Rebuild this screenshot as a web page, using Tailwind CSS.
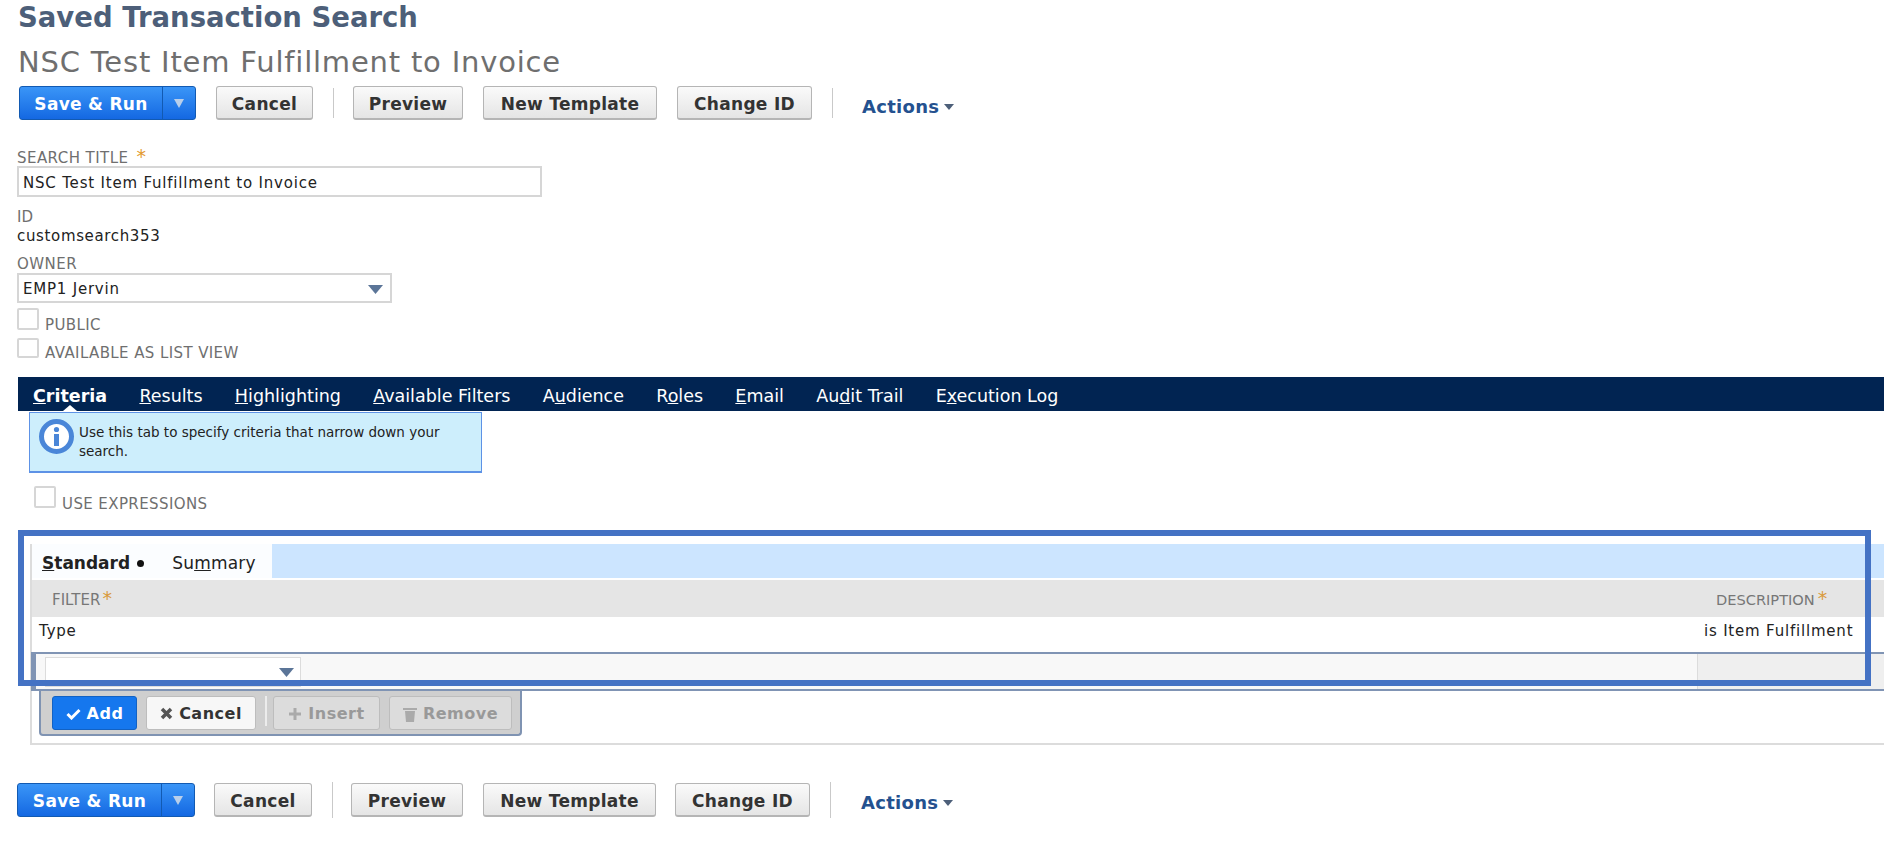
<!DOCTYPE html>
<html><head><meta charset="utf-8"><script src="https://cdn.jsdelivr.net/npm/@tailwindcss/browser@4"></script></head>
<body class="bg-white">
<div class="relative w-[1884px] h-[855px] overflow-hidden bg-white text-[#222] font-['DejaVu_Sans',sans-serif]">
  <h1 class="h-[32px] pl-[18px] leading-[34px] text-[27.5px] font-bold text-[#4d5f79]">Saved Transaction Search</h1>
  <h2 class="mt-[14px] h-[30px] pl-[18px] leading-[32px] text-[29px] tracking-[0.8px] text-[#6f6f6f]">NSC Test Item Fulfillment to Invoice</h2>
  <div class="mt-[10px] ml-[19px] flex items-center h-[34px] text-[17px] tracking-[0.3px] font-bold text-[#333]">
    <div class="flex h-[34px] w-[177px] rounded-[3px] border border-[#125ab2] bg-gradient-to-b from-[#3a95f7] to-[#1468e2] text-white">
      <div class="w-[143px] pt-[4px] flex items-center justify-center border-r border-[#125ab2]">Save &amp; Run</div>
      <div class="flex-1 flex items-center justify-center"><svg width="10" height="10" viewBox="0 0 10 10"><path d="M0 1h10L5 10z" fill="#b9cfea"/></svg></div>
    </div>
    <div class="ml-[20px] w-[97px] h-[34px] pt-[4px] flex items-center justify-center rounded-[3px] border border-[#b5b5b5] border-b-2 bg-gradient-to-b from-[#fafafa] to-[#e5e5e5]">Cancel</div>
    <div class="ml-[20px] w-px h-[30px] bg-[#c9c9c9]"></div>
    <div class="ml-[19px] w-[110px] h-[34px] pt-[4px] flex items-center justify-center rounded-[3px] border border-[#b5b5b5] border-b-2 bg-gradient-to-b from-[#fafafa] to-[#e5e5e5]">Preview</div>
    <div class="ml-[20px] w-[174px] h-[34px] pt-[4px] flex items-center justify-center rounded-[3px] border border-[#b5b5b5] border-b-2 bg-gradient-to-b from-[#fafafa] to-[#e5e5e5]">New Template</div>
    <div class="ml-[20px] w-[135px] h-[34px] pt-[4px] flex items-center justify-center rounded-[3px] border border-[#b5b5b5] border-b-2 bg-gradient-to-b from-[#fafafa] to-[#e5e5e5]">Change ID</div>
    <div class="ml-[20px] w-px h-[30px] bg-[#c9c9c9]"></div>
    <div class="ml-[29px] flex items-center gap-[5px] text-[#24518f] text-[18px] tracking-[0.3px] pt-[7px]">Actions<svg width="10" height="6" viewBox="0 0 10 6"><path d="M0 0h10L5 6z" fill="#4d5f79"/></svg></div>
  </div>

  <div class="ml-[17px] mt-[29px] pt-px h-[17px] flex items-start text-[15px] tracking-[0.45px] leading-[17px] text-[#6f6f6f]">SEARCH TITLE<span class="ml-[8px] text-[#e39a2f] text-[19px] leading-[12px]">*</span></div>
  <div class="ml-[17px] w-[525px] h-[31px] border-2 border-[#d6d6d6] pl-[4px] pt-[3px] flex items-center text-[15px] tracking-[0.8px] text-[#222]">NSC Test Item Fulfillment to Invoice</div>
  <div class="ml-[17px] mt-[12px] h-[16px] leading-[16px] text-[15px] text-[#6f6f6f]">ID</div>
  <div class="ml-[17px] mt-[3px] h-[16px] leading-[16px] text-[15px] tracking-[0.65px] text-[#222]">customsearch353</div>
  <div class="ml-[17px] mt-[11px] h-[16px] leading-[18px] text-[15px] tracking-[0.45px] text-[#6f6f6f]">OWNER</div>
  <div class="ml-[17px] mt-[2px] w-[375px] h-[30px] border-2 border-[#d6d6d6] pl-[4px] pr-[7px] pt-[2px] flex items-center justify-between text-[15px] tracking-[0.78px]">EMP1 Jervin<svg width="15" height="9" viewBox="0 0 15 9"><path d="M0 0h15L7.500 9z" fill="#5b7598"/></svg></div>
  <div class="ml-[17px] mt-[5px] h-[22px] flex items-end">
    <div class="w-[22px] h-[22px] border-2 border-[#d6d6d6] rounded-[2px]"></div>
    <div class="ml-[6px] h-[14px] leading-[16px] text-[15px] tracking-[0.4px] text-[#6f6f6f] -mb-[1px]">PUBLIC</div>
  </div>
  <div class="ml-[17px] mt-[8px] h-[20px] flex items-end">
    <div class="w-[22px] h-[20px] border-2 border-[#d6d6d6] rounded-[2px]"></div>
    <div class="ml-[6px] h-[14px] leading-[14px] text-[15px] tracking-[0.4px] text-[#6f6f6f] -mb-[2px]">AVAILABLE AS LIST VIEW</div>
  </div>

  <div class="relative ml-[18px] mt-[19px] h-[34px] bg-[#012452] pl-[15px] pt-[4px] flex items-center gap-[32.25px] text-[17.5px] text-white">
    <span class="font-bold"><u>C</u>riteria</span>
    <span><u>R</u>esults</span>
    <span><u>H</u>ighlighting</span>
    <span><u>A</u>vailable Filters</span>
    <span>A<u>u</u>dience</span>
    <span>R<u>o</u>les</span>
    <span><u>E</u>mail</span>
    <span>Au<u>d</u>it Trail</span>
    <span>E<u>x</u>ecution Log</span>
    <div class="absolute left-[45px] bottom-0 w-0 h-0 border-x-[7px] border-x-transparent border-b-[6px] border-b-white"></div>
  </div>
  <div class="ml-[29px] mt-px w-[453px] h-[61px] bg-[#cdeefc] border border-[#5d92e6] border-b-2 flex items-start pl-[9px] pt-[6px]">
    <svg class="shrink-0" width="35" height="35" viewBox="0 0 35 35"><circle cx="17.500" cy="17.500" r="15" fill="#fff" stroke="#4a86d8" stroke-width="5"/><circle cx="17.500" cy="10.500" r="2.600" fill="#4a86d8"/><rect x="15" y="15" width="5" height="12" fill="#4a86d8"/></svg>
    <div class="ml-[5px] mt-[4px] text-[13.5px] leading-[19px] text-[#222] w-[380px]">Use this tab to specify criteria that narrow down your search.</div>
  </div>
  <div class="ml-[34px] mt-[13px] h-[22px] flex items-end">
    <div class="w-[22px] h-[22px] border-2 border-[#d6d6d6] rounded-[2px]"></div>
    <div class="ml-[6px] h-[14px] leading-[16px] text-[15px] tracking-[0.4px] text-[#6f6f6f] -mb-[2px]">USE EXPRESSIONS</div>
  </div>

  <div class="ml-[30px] mt-[36px] h-[201px] border-l-2 border-b-2 border-[#dcdcdc]">
    <div class="h-[34px] bg-[#cce5ff] flex">
      <div class="w-[240px] bg-[#fbfdff] pl-[10px] pt-[5px] flex items-center text-[17px] text-[#222]">
        <span class="font-bold"><u>S</u>tandard</span><span class="ml-[7px] w-[7px] h-[7px] rounded-full bg-[#111]"></span>
        <span class="ml-[28px] tracking-[0.2px]">Su<u>m</u>mary</span>
      </div>
    </div>
    <div class="mt-[2px] pt-[3px] h-[37px] bg-[#e5e5e5] flex items-center justify-between text-[#777]">
      <div class="pl-[20px] text-[15px]">FILTER<span class="ml-[2px] text-[#d99a3c] text-[19px] leading-[10px]">*</span></div>
      <div class="w-[168px] text-[14.6px]">DESCRIPTION<span class="ml-[3px] text-[#d99a3c] text-[19px] leading-[10px]">*</span></div>
    </div>
    <div class="h-[35px] flex justify-between text-[15px] tracking-[0.8px] text-[#222] pt-[3px]">
      <div class="pl-[7px]">Type</div>
      <div class="w-[180px]">is Item Fulfillment</div>
    </div>
    <div class="h-[39px] -ml-px flex border-y-2 border-[#8094b4] border-l-[5px] bg-[#f8f8f8]">
      <div class="flex-1 pl-[9px] pt-[3px]">
        <div class="w-[256px] h-[30px] bg-white border border-[#dcdcdc] flex items-center justify-end pr-[6px]"><svg width="15" height="9" viewBox="0 0 15 9"><path d="M0 0h15L7.500 9z" fill="#5b7598"/></svg></div>
      </div>
      <div class="w-[187px] border-l border-[#dcdcdc] bg-[#efefef]"></div>
    </div>
    <div class="ml-[7px] w-[483px] h-[45px] bg-[#cfcfcf] border-2 border-t-0 border-[#7f93b2] rounded-b-[4px] flex items-start pt-[5px] pl-[11px] text-[16px] tracking-[0.5px] font-bold">
      <div class="w-[85px] h-[34px] pt-px bg-[#1577ee] border border-[#1262c4] rounded-[3px] text-white flex items-center justify-center gap-[6px]"><svg width="15" height="12" viewBox="0 0 15 12"><path d="M1.500 6l4 4 8-8" fill="none" stroke="#fff" stroke-width="3"/></svg>Add</div>
      <div class="ml-[9px] w-[110px] h-[34px] pt-px bg-[#f7f7f7] border border-[#bdbdbd] rounded-[3px] text-[#333] flex items-center justify-center gap-[6px]"><svg width="13" height="13" viewBox="0 0 13 13"><path d="M2 2l9 9M11 2l-9 9" fill="none" stroke="#555" stroke-width="3.500"/></svg>Cancel</div>
      <div class="ml-[9px] w-[2px] h-[30px] bg-[#ececec]"></div>
      <div class="ml-[6px] w-[107px] h-[34px] pt-px bg-[#dcdcdc] border border-[#bdbdbd] rounded-[3px] text-[#999] flex items-center justify-center gap-[6px]"><svg width="14" height="14" viewBox="0 0 14 14"><path d="M7 1v12M1 7h12" fill="none" stroke="#aaa" stroke-width="3"/></svg>Insert</div>
      <div class="ml-[9px] w-[123px] h-[34px] pt-px bg-[#dcdcdc] border border-[#bdbdbd] rounded-[3px] text-[#999] flex items-center justify-center gap-[6px]"><svg width="14" height="16" viewBox="0 0 14 16"><path d="M0 2h14v2H0zM2 5h10l-1 11H3z" fill="#aaa"/></svg>Remove</div>
    </div>
  </div>

  <div class="mt-[38px] ml-[17px] flex items-center h-[34px] text-[17px] tracking-[0.3px] font-bold text-[#333]">
    <div class="flex h-[34px] w-[178px] rounded-[3px] border border-[#125ab2] bg-gradient-to-b from-[#3a95f7] to-[#1468e2] text-white">
      <div class="w-[144px] pt-[4px] flex items-center justify-center border-r border-[#125ab2]">Save &amp; Run</div>
      <div class="flex-1 flex items-center justify-center"><svg width="10" height="10" viewBox="0 0 10 10"><path d="M0 1h10L5 10z" fill="#b9cfea"/></svg></div>
    </div>
    <div class="ml-[19px] w-[98px] h-[34px] pt-[4px] flex items-center justify-center rounded-[3px] border border-[#b5b5b5] border-b-2 bg-gradient-to-b from-[#fafafa] to-[#e5e5e5]">Cancel</div>
    <div class="ml-[20px] w-px h-[36px] bg-[#c9c9c9]"></div>
    <div class="ml-[18px] w-[112px] h-[34px] pt-[4px] flex items-center justify-center rounded-[3px] border border-[#b5b5b5] border-b-2 bg-gradient-to-b from-[#fafafa] to-[#e5e5e5]">Preview</div>
    <div class="ml-[20px] w-[173px] h-[34px] pt-[4px] flex items-center justify-center rounded-[3px] border border-[#b5b5b5] border-b-2 bg-gradient-to-b from-[#fafafa] to-[#e5e5e5]">New Template</div>
    <div class="ml-[19px] w-[135px] h-[34px] pt-[4px] flex items-center justify-center rounded-[3px] border border-[#b5b5b5] border-b-2 bg-gradient-to-b from-[#fafafa] to-[#e5e5e5]">Change ID</div>
    <div class="ml-[20px] w-px h-[36px] bg-[#c9c9c9]"></div>
    <div class="ml-[30px] flex items-center gap-[5px] text-[#24518f] text-[18px] tracking-[0.3px] pt-[5px]">Actions<svg width="10" height="6" viewBox="0 0 10 6"><path d="M0 0h10L5 6z" fill="#4d5f79"/></svg></div>
  </div>

  <div class="absolute left-[18px] top-[530px] w-[1853px] h-[156px] border-[6px] border-[#4472c4]"></div>
</div>
</body></html>
